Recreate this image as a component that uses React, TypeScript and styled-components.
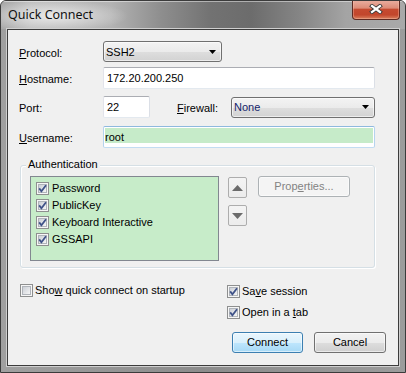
import React from 'react';
import styled, { createGlobalStyle } from 'styled-components';

const Global = createGlobalStyle`
  html, body { margin: 0; padding: 0; background: #ffffff; }
  body { font-family: "Liberation Sans", Arial, sans-serif; font-size: 11px; color: #000; }
  * { box-sizing: border-box; }
`;

const Window = styled.div`
  width: 406px;
  height: 373px;
  display: flex;
  flex-direction: column;
  border: 1px solid #3b3b3b;
  border-radius: 6px 6px 0 0;
  overflow: hidden;
  background: #8f8f8f;
`;

const TitleBar = styled.div`
  height: 28px;
  flex: none;
  display: flex;
  align-items: flex-start;
  background:
    radial-gradient(ellipse 75px 16px at 52px 15px, rgba(236,236,236,0.95), rgba(236,236,236,0) 100%),
    linear-gradient(90deg, #a9a9a9 0, #bdbdbd 30px, #b3b3b3 110px, #8e8e8e 160px, #727272 210px, #6c6c6c 250px, #868686 300px, #a4a4a4 345px, #a9a9a9 404px);
  box-shadow: inset 0 1px 0 rgba(255,255,255,0.45);
`;

const Title = styled.div`
  flex: 1;
  padding: 6px 0 0 7px;
  font-family: "Noto Sans", "Open Sans", sans-serif;
  font-size: 12.5px;
  line-height: 16px;
  color: #111;
`;

const CloseButton = styled.div`
  width: 48px;
  height: 20px;
  margin: -1px 5px 0 0;
  border: 1px solid #5e2a22;
  border-top: none;
  border-radius: 0 0 4px 4px;
  background: linear-gradient(180deg, #eab0a2 0%, #dc8c78 42%, #c54a30 50%, #c2462c 78%, #d9805e 100%);
  box-shadow: inset 0 0 0 1px rgba(255,210,190,0.35);
  display: flex;
  align-items: center;
  justify-content: center;
  padding-bottom: 1px;
`;

const Frame = styled.div`
  flex: 1;
  display: flex;
  padding: 0 6px 6px 6px;
  background: linear-gradient(90deg, #a0a0a0, #8c8c8c 50%, #9c9c9c);
`;

const Client = styled.div`
  flex: 1;
  display: flex;
  flex-direction: column;
  border: 1px solid #3c3c3c;
  box-shadow: 0 0 0 1px #cfcfcf;
  background: #f0f0f0;
  padding: 11px 0 0 11px;
`;

const Row = styled.div<{ $mt: number; $h: number }>`
  display: flex;
  align-items: center;
  height: ${p => p.$h}px;
  margin-top: ${p => p.$mt}px;
`;

const Label = styled.span<{ $w: number; $ml?: number }>`
  width: ${p => p.$w}px;
  margin-left: ${p => p.$ml ?? 0}px;
  flex: none;
  padding-top: 2px;
  white-space: nowrap;
`;

const Select = styled.div<{ $w: number; $h: number; $color?: string }>`
  width: ${p => p.$w}px;
  height: ${p => p.$h}px;
  flex: none;
  border: 1px solid #707070;
  border-radius: 3px;
  background: linear-gradient(180deg, #f3f3f3 0%, #ebebeb 50%, #dedede 51%, #d2d2d2 100%);
  box-shadow: inset 0 0 0 1px rgba(255,255,255,0.6);
  display: flex;
  align-items: center;
  justify-content: space-between;
  padding: 0 5px 0 2px;
  color: ${p => p.$color ?? '#000'};
`;

const TextBox = styled.div<{ $w: number; $focus?: boolean }>`
  width: ${p => p.$w}px;
  height: 22px;
  flex: none;
  border: 1px solid;
  border-color: ${p => (p.$focus ? '#8fb9de #b5d3ee #c2dcf2 #b5d3ee' : '#abadb3 #dbdfe6 #e3e9ef #e2e3ea')};
  border-radius: 2px;
  background: ${p =>
    p.$focus
      ? 'linear-gradient(#c6ebc9, #c6ebc9) 1px 1px / calc(100% - 2px) 15px no-repeat, #ffffff'
      : '#ffffff'};
  padding: 0 0 1px ${p => (p.$focus ? 1 : 3)}px;
  display: flex;
  align-items: center;
`;

const Group = styled.div`
  position: relative;
  margin: 17px 0 0 1px;
  width: 355px;
  height: 103px;
  flex: none;
  border: 1px solid #d5dfe5;
  border-radius: 3px;
  box-shadow: inset 1px 1px 0 #ffffff, 1px 1px 0 #ffffff;
  padding: 10px 0 0 9px;
  display: flex;
  align-items: flex-start;
`;

const Legend = styled.span`
  position: absolute;
  top: -8px;
  left: 5px;
  padding: 0 2px;
  background: #f0f0f0;
  line-height: 13px;
`;

const List = styled.div`
  width: 189px;
  height: 85px;
  flex: none;
  border: 1px solid #828790;
  background: #c7ecc9;
  padding: 5px 0 0 5px;
  display: flex;
  flex-direction: column;
`;

const CheckRow = styled.div<{ $h: number; $gap: number; $mt?: number }>`
  height: ${p => p.$h}px;
  margin-top: ${p => p.$mt ?? 0}px;
  display: flex;
  align-items: flex-start;
  gap: ${p => p.$gap}px;
  white-space: nowrap;
`;

const CheckText = styled.span`
  line-height: 13px;
`;

const SideCol = styled.div`
  display: flex;
  flex-direction: column;
  gap: 7px;
  margin: 1px 0 0 9px;
`;

const ArrowButton = styled.div`
  width: 19px;
  height: 21px;
  border: 1px solid #adadad;
  border-radius: 2px;
  background: linear-gradient(180deg, #f4f4f4, #ececec);
  display: flex;
  align-items: center;
  justify-content: center;
`;

const PushButton = styled.div<{ $w: number; $ml?: number; $variant?: 'default' | 'disabled' | 'normal' }>`
  width: ${p => p.$w}px;
  height: 21px;
  flex: none;
  margin-left: ${p => p.$ml ?? 0}px;
  border: 1px solid ${p => (p.$variant === 'default' ? '#3c7fb1' : p.$variant === 'disabled' ? '#adb2b5' : '#707070')};
  border-radius: 3px;
  background: ${p =>
    p.$variant === 'default'
      ? 'linear-gradient(180deg, #eaf6fd 0%, #d9f0fc 50%, #bee6fd 51%, #a7d9f5 100%)'
      : p.$variant === 'disabled'
      ? '#f4f4f4'
      : 'linear-gradient(180deg, #f2f2f2 0%, #ebebeb 50%, #dddddd 51%, #cfcfcf 100%)'};
  box-shadow: inset 0 0 0 1px rgba(255,255,255,0.55);
  color: ${p => (p.$variant === 'disabled' ? '#838383' : '#000')};
  display: flex;
  align-items: center;
  justify-content: center;
  padding-bottom: 1px;
`;

const Bottom = styled.div`
  display: flex;
  margin: 16px 0 0 1px;
`;

const LeftCol = styled.div`
  width: 207px;
  flex: none;
  display: flex;
  flex-direction: column;
`;

const RightCol = styled.div`
  display: flex;
  flex-direction: column;
  margin-top: 1px;
`;

const ButtonRow = styled.div`
  display: flex;
  gap: 11px;
  margin: 11px 0 0 5px;
`;

const CheckSvg = styled.svg`
  flex: none;
  display: block;
`;

const IconSvg = styled.svg`
  flex: none;
  display: block;
`;

function Checkbox({ checked }: { checked: boolean }) {
  const gid = 'cb' + React.useId().replace(/[^a-zA-Z0-9]/g, '');
  return (
    <CheckSvg width={13} height={13} viewBox="0 0 13 13">
      <defs>
        <linearGradient id={gid} x1="0" y1="0" x2="1" y2="1">
          <stop offset="0" stopColor="#c9cdd4" />
          <stop offset="1" stopColor="#f8f8f8" />
        </linearGradient>
      </defs>
      <rect x="0.5" y="0.5" width="12" height="12" fill="#f6f6f6" stroke="#8e8f8f" />
      <rect x="2.5" y="2.5" width="8" height="8" fill={`url(#${gid})`} stroke="#b0b4ba" />
      {checked && (
        <path d="M3.2 6.4 L5.4 9.2 L10 3.2" fill="none" stroke="#3f5288" strokeWidth="1.8" strokeLinejoin="miter" />
      )}
    </CheckSvg>
  );
}

const DropArrow = () => (
  <IconSvg width={7} height={4} viewBox="0 0 7 4">
    <path d="M0 0 H7 L3.5 4 Z" fill="#000" />
  </IconSvg>
);

const Tri = ({ up }: { up: boolean }) => (
  <IconSvg width={11} height={6} viewBox="0 0 11 6">
    <path d={up ? 'M0 6 H11 L5.5 0 Z' : 'M0 0 H11 L5.5 6 Z'} fill="#6b6b6b" />
  </IconSvg>
);

const CloseGlyph = () => (
  <IconSvg width={14} height={10} viewBox="0 0 14 10">
    <path d="M3 2 L11 8 M11 2 L3 8" stroke="#3a3a3a" strokeWidth="4" strokeLinecap="square" />
    <path d="M3 2 L11 8 M11 2 L3 8" stroke="#ffffff" strokeWidth="2.2" strokeLinecap="square" />
  </IconSvg>
);

export default function App() {
  return (
    <>
      <Global />
      <Window>
        <TitleBar>
          <Title>Quick Connect</Title>
          <CloseButton>
            <CloseGlyph />
          </CloseButton>
        </TitleBar>
        <Frame>
          <Client>
            <Row $mt={0} $h={21}>
              <Label $w={84}><u>P</u>rotocol:</Label>
              <Select $w={119} $h={21}>
                <span>SSH2</span>
                <DropArrow />
              </Select>
            </Row>
            <Row $mt={5} $h={22}>
              <Label $w={84}><u>H</u>ostname:</Label>
              <TextBox $w={272}>172.20.200.250</TextBox>
            </Row>
            <Row $mt={7} $h={22}>
              <Label $w={84}>Port:</Label>
              <TextBox $w={47}>22</TextBox>
              <Label $w={54} $ml={27}><u>F</u>irewall:</Label>
              <Select $w={144} $h={21} $color="#14246a">
                <span>None</span>
                <DropArrow />
              </Select>
            </Row>
            <Row $mt={8} $h={22}>
              <Label $w={84}><u>U</u>sername:</Label>
              <TextBox $w={272} $focus>root</TextBox>
            </Row>
            <Group>
              <Legend>Authentication</Legend>
              <List>
                {['Password', 'PublicKey', 'Keyboard Interactive', 'GSSAPI'].map(t => (
                  <CheckRow key={t} $h={17} $gap={3}>
                    <Checkbox checked />
                    <CheckText>{t}</CheckText>
                  </CheckRow>
                ))}
              </List>
              <SideCol>
                <ArrowButton><Tri up /></ArrowButton>
                <ArrowButton><Tri up={false} /></ArrowButton>
              </SideCol>
              <PushButton $w={92} $ml={11} $variant="disabled">
                <span>Prop<u>e</u>rties...</span>
              </PushButton>
            </Group>
            <Bottom>
              <LeftCol>
                <CheckRow $h={15} $gap={2}>
                  <Checkbox checked={false} />
                  <CheckText>Sho<u>w</u> quick connect on startup</CheckText>
                </CheckRow>
              </LeftCol>
              <RightCol>
                <CheckRow $h={15} $gap={2}>
                  <Checkbox checked />
                  <CheckText>Sa<u>v</u>e session</CheckText>
                </CheckRow>
                <CheckRow $h={15} $gap={2} $mt={6}>
                  <Checkbox checked />
                  <CheckText>Open in a <u>t</u>ab</CheckText>
                </CheckRow>
                <ButtonRow>
                  <PushButton $w={71} $variant="default">Connect</PushButton>
                  <PushButton $w={72} $variant="normal">Cancel</PushButton>
                </ButtonRow>
              </RightCol>
            </Bottom>
          </Client>
        </Frame>
      </Window>
    </>
  );
}
